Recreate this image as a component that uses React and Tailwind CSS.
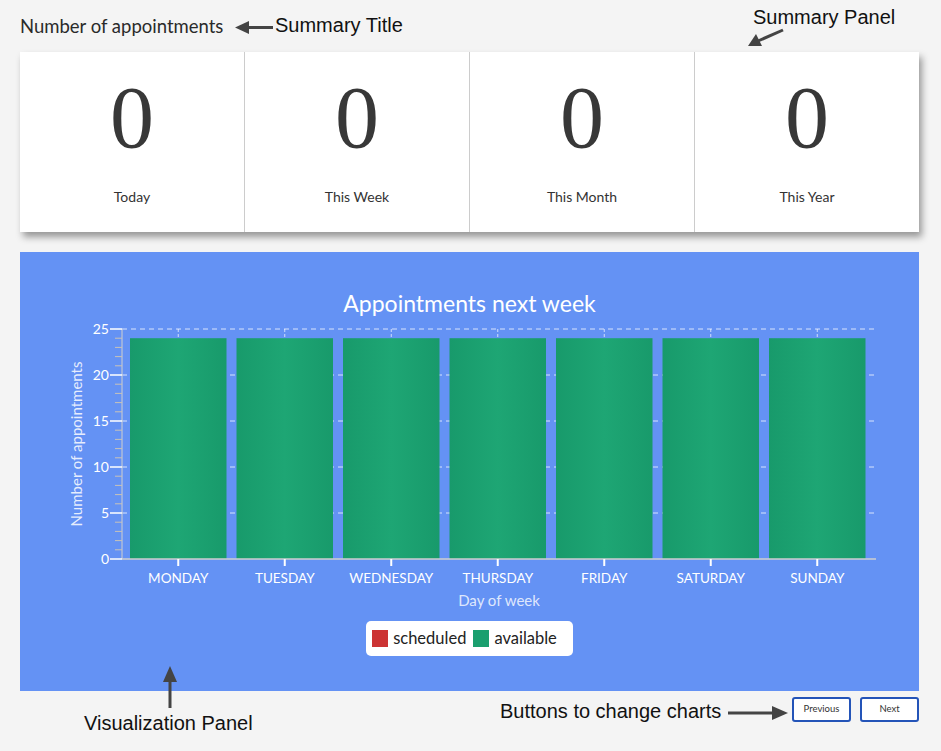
import { useState } from 'react'

const stats = [
  { label: 'Today', value: 0 },
  { label: 'This Week', value: 0 },
  { label: 'This Month', value: 0 },
  { label: 'This Year', value: 0 },
]

const days = ['MONDAY', 'TUESDAY', 'WEDNESDAY', 'THURSDAY', 'FRIDAY', 'SATURDAY', 'SUNDAY']
const available = [24, 24, 24, 24, 24, 24, 24]

// chart geometry (svg coords)
const axisX = 102
const plotRight = 856
const plotTop = 10
const plotBottom = 240
const unit = (plotBottom - plotTop) / 25
const step = 106.5
const barW = 96.5
const firstBar = 110

function Chart() {
  const y = (v) => plotBottom - v * unit
  const minor = Array.from({ length: 26 }, (_, i) => i)
  return (
    <svg width="899" height="293" className="mt-[2px] block" style={{ fontFamily: 'Lato, sans-serif' }}>
      <defs>
        <linearGradient id="bar" x1="0" x2="1" y1="0" y2="0">
          <stop offset="0" stopColor="#189a6b" />
          <stop offset="0.5" stopColor="#1ea674" />
          <stop offset="1" stopColor="#189a6b" />
        </linearGradient>
      </defs>

      {/* grid */}
      {[5, 10, 15, 20, 25].map(v => (
        <line key={v} x1={axisX} x2={plotRight} y1={y(v)} y2={y(v)} stroke="#ffffff" strokeOpacity="0.75" strokeDasharray="5 4" strokeWidth="1" />
      ))}
      {days.map((d, i) => {
        const cx = firstBar + i * step + barW / 2
        return <line key={d} x1={cx} x2={cx} y1={plotTop} y2={plotTop + 8} stroke="#ffffff" strokeOpacity="0.7" strokeDasharray="3 2" />
      })}

      {/* bars */}
      {available.map((v, i) => (
        <rect key={i} x={firstBar + i * step} y={y(v)} width={barW} height={v * unit} fill="url(#bar)" />
      ))}

      {/* y axis */}
      <line x1={axisX} x2={axisX} y1={plotTop} y2={plotBottom} stroke="#cfcfcf" />
      {minor.map(v => (
        v % 5 === 0 ? (
          <line key={v} x1={axisX - 12} x2={axisX} y1={y(v)} y2={y(v)} stroke="#ffffff" strokeWidth="1.5" />
        ) : (
          <line key={v} x1={axisX - 7} x2={axisX} y1={y(v)} y2={y(v)} stroke="#c9c3b8" strokeWidth="1" />
        )
      ))}
      {[0, 5, 10, 15, 20, 25].map(v => (
        <text key={v} x={axisX - 13} y={y(v) + 5} textAnchor="end" fontSize="14" fill="#ffffff">{v}</text>
      ))}
      <text transform="translate(62 125) rotate(-90)" textAnchor="middle" fontSize="15" fill="#ffffff" fillOpacity="0.85">Number of appointments</text>

      {/* x axis */}
      <line x1={axisX} x2={plotRight} y1={plotBottom} y2={plotBottom} stroke="#cfcfcf" strokeWidth="1.5" />
      {days.map((d, i) => {
        const cx = firstBar + i * step + barW / 2
        return (
          <g key={d}>
            <line x1={cx} x2={cx} y1={plotBottom} y2={plotBottom + 7} stroke="#ffffff" strokeWidth="2" />
            <text x={cx} y={264} textAnchor="middle" fontSize="13.5" fill="#ffffff">{d}</text>
          </g>
        )
      })}
      <text x={479} y={287} textAnchor="middle" fontSize="15" fill="#ffffff" fillOpacity="0.8">Day of week</text>
    </svg>
  )
}

function Arrow({ className, width, height, children }) {
  return (
    <svg className={'absolute ' + className} width={width} height={height}>
      {children}
    </svg>
  )
}

const note = { fontFamily: '"Liberation Sans", sans-serif' }

export default function App() {
  const [chart, setChart] = useState(0)

  return (
    <div className="relative h-[751px] w-[941px] overflow-hidden bg-[#f4f4f4] pl-[20px] pr-[22px] text-[#333]" style={{ fontFamily: 'Lato, sans-serif' }}>
      <div className="pt-[14px] text-[18.5px] leading-[24px] text-[#2a2a2a]">Number of appointments</div>

      <div className="mt-[14px] flex h-[180px] bg-white shadow-[3px_5px_7px_rgba(0,0,0,0.38)]">
        {stats.map((s, i) => (
          <div key={s.label} className={'flex flex-1 flex-col items-center ' + (i > 0 ? 'border-l border-[#cccccc]' : '')}>
            <div className="mt-[26px] text-[88px] leading-[80px] text-[#383838]" style={{ fontFamily: '"Liberation Serif", serif' }}>{s.value}</div>
            <div className="mt-[28px] text-[14px] text-[#333]">{s.label}</div>
          </div>
        ))}
      </div>

      <div className="mt-[20px] h-[439px] bg-[#6492f4]">
        <div className="pt-[37px] text-center text-[23px] leading-[28px] text-white">Appointments next week</div>
        <Chart key={chart} />
        <div className="mt-[9px] flex justify-center">
          <div className="flex h-[35px] items-center gap-[5px] rounded-[5px] bg-white px-[6px] text-[16.5px] text-[#222]">
            <span className="h-[17px] w-[16px] bg-[#cc3333]" />
            <span className="mr-[2px]">scheduled</span>
            <span className="h-[17px] w-[16px] bg-[#1a9f6e]" />
            <span className="mr-[10px]">available</span>
          </div>
        </div>
      </div>

      <div className="mt-[6px] flex justify-end gap-[9px]">
        <button onClick={() => setChart(chart - 1)} className="h-[25px] w-[59px] rounded-[3px] border-2 border-[#2454b8] bg-white text-[9.5px] text-[#333]">Previous</button>
        <button onClick={() => setChart(chart + 1)} className="h-[25px] w-[59px] rounded-[3px] border-2 border-[#2454b8] bg-white text-[9.5px] text-[#333]">Next</button>
      </div>

      {/* annotations */}
      <div className="absolute left-[275px] top-[10px] text-[20px] text-[#111]" style={note}>Summary Title</div>
      <Arrow className="left-[234px] top-[20px]" width="40" height="16">
        <line x1="10" y1="7.5" x2="39" y2="7.5" stroke="#444" strokeWidth="3" />
        <polygon points="1,7.5 15,1 15,14" fill="#444" />
      </Arrow>

      <div className="absolute left-[753px] top-[2px] text-[20px] text-[#111]" style={note}>Summary Panel</div>
      <Arrow className="left-[746px] top-[27px]" width="40" height="22">
        <line x1="37" y1="3" x2="12" y2="14" stroke="#444" strokeWidth="3" />
        <polygon points="2,19 10,7 16,19" fill="#444" />
      </Arrow>

      <div className="absolute left-[84px] top-[708px] text-[20px] text-[#111]" style={note}>Visualization Panel</div>
      <Arrow className="left-[162px] top-[665px]" width="16" height="44">
        <line x1="8" y1="12" x2="8" y2="43" stroke="#444" strokeWidth="3" />
        <polygon points="8,1 1,17 15,17" fill="#444" />
      </Arrow>

      <div className="absolute left-[500px] top-[696px] text-[20px] text-[#111]" style={note}>Buttons to change charts</div>
      <Arrow className="left-[728px] top-[705px]" width="62" height="16">
        <line x1="0" y1="8" x2="48" y2="8" stroke="#444" strokeWidth="3" />
        <polygon points="60,8 44,1 44,15" fill="#444" />
      </Arrow>
    </div>
  )
}
